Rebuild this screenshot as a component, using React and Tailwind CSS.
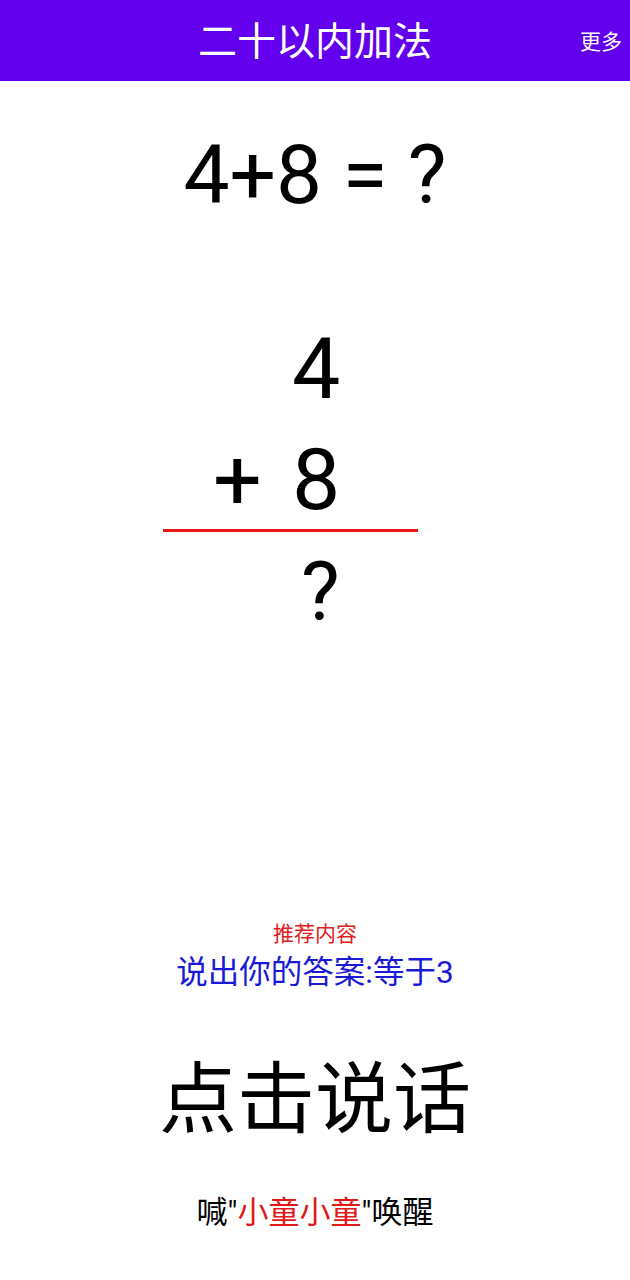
export default function App() {
  const cjk = { fontFamily: 'Roboto, "Noto Sans CJK SC", sans-serif' };
  return (
    <div className="w-[630px] h-[1280px] bg-white flex flex-col" style={cjk}>
      <div className="h-[81px] bg-[#6200ee] relative flex items-center justify-center shrink-0 pt-[4px]">
        <span className="text-white text-[39px] leading-none">二十以内加法</span>
        <span className="absolute right-[8px] top-[32px] text-white text-[21px] leading-none">更多</span>
      </div>
      <div className="mt-[48px] text-center text-black text-[82px] leading-[92px]">4+8 = ?</div>
      <div className="mt-[105px] ml-[163px] w-[255px] flex flex-col items-start">
        <div className="text-[86px] leading-[86px] text-black pl-[129px]">4</div>
        <div className="mt-[25px] text-[86px] leading-[86px] text-black flex w-full pl-[50px]">
          <span className="w-[79px]">+</span>
          <span>8</span>
        </div>
        <div className="mt-[6px] h-[3px] w-full bg-[#e81818]"></div>
        <div className="mt-[19px] text-[82px] leading-[82px] text-black pl-[138px]">?</div>
      </div>
      <div className="mt-[291px] text-center text-[#e02020] text-[21px] leading-none">推荐内容</div>
      <div className="mt-[12px] text-center text-[#1a1ad6] text-[31.5px] leading-none">说出你的答案:等于3</div>
      <div className="mt-[73px] text-center text-black text-[78px] leading-none">点击说话</div>
      <div className="mt-[57px] text-center text-black text-[31px] leading-none">
        喊"<span className="text-[#e01818]">小童小童</span>"唤醒
      </div>
    </div>
  );
}
